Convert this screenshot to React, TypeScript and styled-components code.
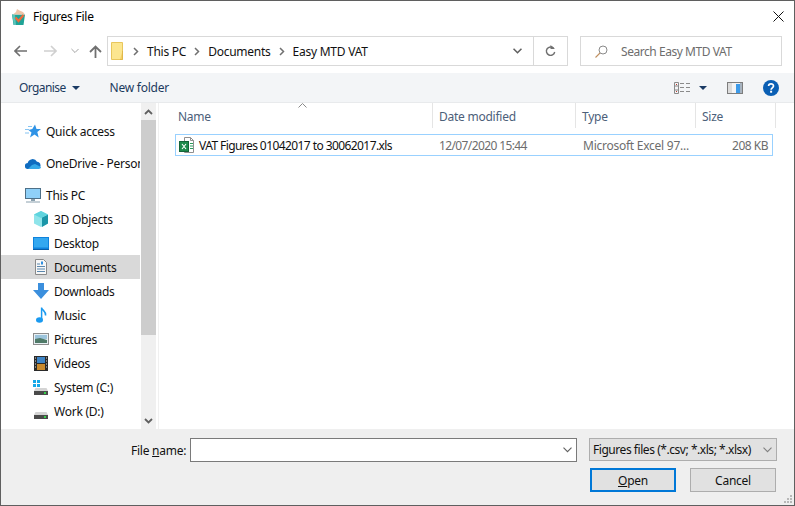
import { FC, ReactNode } from "react";
import styled, { createGlobalStyle } from "styled-components";

const GlobalStyle = createGlobalStyle`
  html, body {
    margin: 0;
    padding: 0;
    background: #fff;
  }
  * {
    box-sizing: border-box;
  }
`;

const ChevronRight = () => (
  <svg width="6" height="9" viewBox="0 0 6 9">
    <path d="M1 1l3.500 3.500L1 8" fill="none" stroke="#707070" strokeWidth="1.500" />
  </svg>
);

const ChevronDown: FC<{ color?: string; weight?: number }> = ({ color = "#606060", weight = 1.1 }) => (
  <svg width="9" height="6" viewBox="0 0 9 6">
    <path d="M.5.7l4 4 4-4" fill="none" stroke={color} strokeWidth={weight} />
  </svg>
);

const Caret: FC<{ color?: string }> = ({ color = "#1a3a64" }) => (
  <svg width="8" height="4" viewBox="0 0 8 4">
    <path d="M0 0h8L4 4z" fill={color} />
  </svg>
);

const AppIcon = () => (
  <svg width="15" height="16" viewBox="0 0 15 16">
    <path d="M1 5.500h13L12.500 16h-10z" fill="#1fa396" />
    <path d="M3 16L1 5.500h3L5 16z" fill="#5cc4ba" />
    <path d="M2 5.500L5 3l1-3 2.500 1.500L12 3l2 2.500z" fill="#eec4a8" />
    <path d="M4.500 8.500l3 3.500 5-6" fill="none" stroke="#ee6a3c" strokeWidth="2.200" />
  </svg>
);

const ArrowLeft: FC<{ color: string }> = ({ color }) => (
  <svg width="13" height="12" viewBox="0 0 13 12">
    <path d="M6 1L1 6l5 5M1 6h12" fill="none" stroke={color} strokeWidth="1.600" />
  </svg>
);

const ArrowRight: FC<{ color: string }> = ({ color }) => (
  <svg width="13" height="12" viewBox="0 0 13 12">
    <path d="M7 1l5 5-5 5M12 6H0" fill="none" stroke={color} strokeWidth="1.600" />
  </svg>
);

const ArrowUp = () => (
  <svg width="13" height="13" viewBox="0 0 13 13">
    <path d="M1 7l5.500-5.500L12 7M6.500 2v11" fill="none" stroke="#707070" strokeWidth="1.800" />
  </svg>
);

const FolderIcon = () => (
  <svg width="14" height="18" viewBox="0 0 14 18">
    <path d="M.5.500h11v17H.5z" fill="#fce68f" stroke="#e8c65c" />
    <path d="M11.500 9v8.500H9" fill="#f4cf62" stroke="#e0b84a" />
  </svg>
);

const RefreshIcon = () => (
  <svg width="11" height="12" viewBox="0 0 11 12">
    <path d="M8.600 3.200A4.200 4.200 0 1 0 9.700 7" fill="none" stroke="#707070" strokeWidth="1.400" />
    <path d="M5.500 0v4H10z" fill="#707070" />
  </svg>
);

const SearchIcon = () => (
  <svg width="13" height="13" viewBox="0 0 13 13">
    <circle cx="8" cy="5" r="4" fill="none" stroke="#8a8a8a" />
    <path d="M5 8l-4.500 4.500" stroke="#c09060" strokeWidth="1.100" />
  </svg>
);

const ViewIcon = () => (
  <svg width="16" height="12" viewBox="0 0 16 12">
    <path d="M.5.500h4v11h-4zM.5 4h4M.5 8h4" fill="none" stroke="#8a8a8a" />
    <path d="M6 1.500h4M12 1.500h4M6 5.500h4M12 5.500h4M6 9.500h4M12 9.500h4" stroke="#8a8a8a" />
    <path d="M2 2h1v1H2zM2 9h1v1H2z" fill="#c0392b" />
  </svg>
);

const PreviewIcon = () => (
  <svg width="16" height="12" viewBox="0 0 16 12">
    <rect x=".5" y=".5" width="15" height="11" fill="#f4f4f4" stroke="#7d7d7d" />
    <rect x="1" y="1" width="4" height="10" fill="#dcdcdc" />
    <rect x="9" y="2" width="4" height="9" fill="#3d9ae8" />
    <rect x="13" y="1" width="2" height="10" fill="#a8b4c0" />
  </svg>
);

const HelpIcon = () => (
  <svg width="16" height="16" viewBox="0 0 16 16">
    <circle cx="8" cy="8" r="8" fill="#0a5fb4" />
    <path d="M5.600 6.100c0-3 4.900-3 4.900-.1 0 1.800-2.400 1.900-2.400 3.700" fill="none" stroke="#fff" strokeWidth="1.700" />
    <rect x="7.100" y="10.700" width="2" height="2" fill="#fff" />
  </svg>
);

const ExcelIcon = () => (
  <svg width="16" height="16" viewBox="0 0 16 16">
    <path d="M5.500.5h6l3 3v12h-9z" fill="#fff" stroke="#8f8f8f" />
    <path d="M11.500.5v3h3" fill="none" stroke="#8f8f8f" />
    <rect x=".5" y="4.500" width="9" height="10" fill="#1f8a4c" stroke="#14643a" />
    <path d="M3 7l4 5M7 7l-4 5" stroke="#fff" strokeWidth="1.100" />
    <path d="M11 6.500h3M11 9h3M11 11.500h3" stroke="#2a9a5a" />
  </svg>
);

const QuickAccessIcon = () => (
  <svg width="16" height="15" viewBox="0 0 16 15">
    <path d="M10 .5l1.500 4.500H16l-3.700 3 1.400 5.500-4.200-3-4.500 3L6.500 8.500 3.500 6l3.800-1z" fill="#2f93e6" />
    <path d="M0 5.500h4M3 2.500h4M0 9h4" stroke="#86c4f2" />
  </svg>
);

const OneDriveIcon = () => (
  <svg width="16" height="11" viewBox="0 0 16 11">
    <path d="M3 11a3 3 0 0 1-.3-6A5 5 0 0 1 12 3.800 3.700 3.700 0 0 1 13 11z" fill="#0f6cc0" />
    <path d="M3 11l4-4 3-1 6 3c0 1-1 2-3 2z" fill="#35a8e8" />
  </svg>
);

const MonitorIcon = () => (
  <svg width="16" height="15" viewBox="0 0 16 15">
    <rect x=".5" y=".5" width="15" height="10" fill="#8fd0f8" stroke="#4e7088" />
    <path d="M6 11h4v2H6z" fill="#8aa0ae" />
    <path d="M1 14h14" stroke="#8aa0ae" />
  </svg>
);

const CubeIcon = () => (
  <svg width="16" height="16" viewBox="0 0 16 16">
    <path d="M8 0l7 3.500v9L8 16l-7-3.500v-9z" fill="#8fe4ea" />
    <path d="M9 6.500l6-3v9L9 16z" fill="#1a96a8" />
    <path d="M8 0l7 3.500L8 7 1 3.500z" fill="#5fd4de" />
  </svg>
);

const DesktopIcon = () => (
  <svg width="16" height="13" viewBox="0 0 16 13">
    <rect x="0" y="0" width="16" height="12" fill="#0f82dc" />
    <rect x="1" y="1" width="14" height="9.500" fill="#34a8f0" />
    <path d="M0 12.500h16" stroke="#0a5da8" />
  </svg>
);

const DocumentsIcon = () => (
  <svg width="12" height="16" viewBox="0 0 12 16">
    <path d="M.5.500h8l3 3v12H.5z" fill="#f7f7f7" stroke="#8a8a8a" />
    <path d="M2 5h3M2 7.500h8M2 10h8M2 12.500h8" stroke="#5a87ad" />
    <path d="M6 2.500h2v3H6z" fill="#2f8fe0" />
  </svg>
);

const DownloadsIcon = () => (
  <svg width="16" height="16" viewBox="0 0 16 16">
    <path d="M5 0h6v7h5l-8 9-8-9h5z" fill="#3b8fdd" />
  </svg>
);

const MusicIcon = () => (
  <svg width="11" height="16" viewBox="0 0 11 16">
    <ellipse cx="3.500" cy="13" rx="3.500" ry="2.800" fill="#1a9af0" />
    <path d="M5.600 13V.5c.5 3 4.500 3.500 4 8" fill="none" stroke="#1a9af0" strokeWidth="1.500" />
  </svg>
);

const PicturesIcon = () => (
  <svg width="16" height="12" viewBox="0 0 16 12">
    <rect x=".5" y=".5" width="15" height="11" fill="#e8f0f4" stroke="#8d8d8d" />
    <path d="M2 2h12v4H2z" fill="#9cc4dc" />
    <path d="M2 6l5-1 7 2v3H2z" fill="#4f7a68" />
  </svg>
);

const VideosIcon = () => (
  <svg width="14" height="15" viewBox="0 0 14 15">
    <rect width="14" height="15" fill="#2a2a2a" />
    <rect x="3" y="1" width="8" height="6" fill="#3d84c6" />
    <rect x="3" y="8" width="8" height="6" fill="#c98a2e" />
    <path d="M1 2h1M1 5h1M1 8h1M1 11h1M12 2h1M12 5h1M12 8h1M12 11h1" stroke="#ddd" />
  </svg>
);

const DriveIcon: FC<{ system?: boolean }> = ({ system }) => (
  <svg width="16" height="16" viewBox="0 0 16 16">
    {system && <path d="M0 1h3v3H0zM4 1h3v3H4zM0 5h3v3H0zM4 5h3v3H4z" fill="#16a8e8" />}
    <path d="M2.500 9h11l1.500 3H1z" fill="#d4d4d4" />
    <rect x="1" y="12" width="14" height="4" fill="#4a4a4a" />
    <rect x="11" y="13" width="2" height="2" fill="#35d04a" />
  </svg>
);

const Grip = () => (
  <svg width="10" height="10" viewBox="0 0 10 10">
    <path d="M7 1h2v2H7zM4 4h2v2H4zM7 4h2v2H7zM1 7h2v2H1zM4 7h2v2H4zM7 7h2v2H7z" fill="#b8b8b8" />
  </svg>
);

interface NavEntry {
  label: string;
  icon: ReactNode;
  child?: boolean;
  gapBefore?: boolean;
  selected?: boolean;
}

const navEntries: NavEntry[] = [
  { label: "Quick access", icon: <QuickAccessIcon /> },
  { label: "OneDrive - Personal", icon: <OneDriveIcon />, gapBefore: true },
  { label: "This PC", icon: <MonitorIcon />, gapBefore: true },
  { label: "3D Objects", icon: <CubeIcon />, child: true },
  { label: "Desktop", icon: <DesktopIcon />, child: true },
  { label: "Documents", icon: <DocumentsIcon />, child: true, selected: true },
  { label: "Downloads", icon: <DownloadsIcon />, child: true },
  { label: "Music", icon: <MusicIcon />, child: true },
  { label: "Pictures", icon: <PicturesIcon />, child: true },
  { label: "Videos", icon: <VideosIcon />, child: true },
  { label: "System (C:)", icon: <DriveIcon system />, child: true },
  { label: "Work (D:)", icon: <DriveIcon />, child: true },
];

const columns = [
  { label: "Name", width: 261 },
  { label: "Date modified", width: 143 },
  { label: "Type", width: 120 },
  { label: "Size", width: 80 },
];

const App = () => {
  return (
    <>
      <GlobalStyle />
      <Window>
        <TitleBar>
          <AppIcon />
          <Title>Figures File</Title>
          <CloseButton>
            <svg width="11" height="11" viewBox="0 0 11 11">
              <path d="M.5.500l10 10M10.500.5l-10 10" stroke="#111" strokeWidth="1" />
            </svg>
          </CloseButton>
        </TitleBar>

        <NavRow>
          <NavButtons>
            <ArrowLeft color="#707070" />
            <ArrowRight color="#d0d0d0" />
            <SmallChevron>
              <ChevronDown color="#a0a0a0" />
            </SmallChevron>
            <UpButton>
              <ArrowUp />
            </UpButton>
          </NavButtons>
          <AddressBar>
            <Crumbs>
              <FolderIcon />
              <ChevronRight />
              <span>This PC</span>
              <ChevronRight />
              <span>Documents</span>
              <ChevronRight />
              <span>Easy MTD VAT</span>
            </Crumbs>
            <AddressChevron>
              <ChevronDown weight={1.6} />
            </AddressChevron>
            <RefreshButton>
              <RefreshIcon />
            </RefreshButton>
          </AddressBar>
          <SearchBox>
            <SearchIcon />
            <SearchText>Search Easy MTD VAT</SearchText>
          </SearchBox>
        </NavRow>

        <Toolbar>
          <ToolButton>
            <Organise>Organise</Organise>
            <Caret />
          </ToolButton>
          <ToolButton>New folder</ToolButton>
          <ToolIcons>
            <ViewGroup>
              <ViewIcon />
              <Caret />
            </ViewGroup>
            <PreviewIcon />
            <HelpIcon />
          </ToolIcons>
        </Toolbar>

        <Main>
          <Sidebar>
            {navEntries.map((entry) => (
              <NavItem
                key={entry.label}
                $child={entry.child}
                $gapBefore={entry.gapBefore}
                $selected={entry.selected}
              >
                <NavIcon>{entry.icon}</NavIcon>
                <span>{entry.label}</span>
              </NavItem>
            ))}
          </Sidebar>
          <ScrollBar>
            <ScrollArrow>
              <svg width="9" height="6" viewBox="0 0 9 6">
                <path d="M1 5l3.500-3.500L8 5" fill="none" stroke="#606060" strokeWidth="1.800" />
              </svg>
            </ScrollArrow>
            <ScrollThumb />
            <ScrollArrow>
              <svg width="9" height="6" viewBox="0 0 9 6">
                <path d="M1 1l3.500 3.500L8 1" fill="none" stroke="#606060" strokeWidth="1.800" />
              </svg>
            </ScrollArrow>
          </ScrollBar>
          <FileList>
            <ListHeader>
              <SortMark>
                <svg width="9" height="5" viewBox="0 0 9 5">
                  <path d="M.5 4.500l4-4 4 4" fill="none" stroke="#8a8a8a" />
                </svg>
              </SortMark>
              {columns.map((col) => (
                <HeaderCell key={col.label} $width={col.width}>
                  {col.label}
                </HeaderCell>
              ))}
            </ListHeader>
            <FileRow>
              <NameCell>
                <ExcelIcon />
                <FileName>VAT Figures 01042017 to 30062017.xls</FileName>
              </NameCell>
              <DateCell>12/07/2020 15:44</DateCell>
              <TypeCell>Microsoft Excel 97...</TypeCell>
              <SizeCell>208 KB</SizeCell>
            </FileRow>
          </FileList>
        </Main>

        <Footer>
          <FooterRow>
            <FileLabel>
              <span>
                File <u>n</u>ame:
              </span>
            </FileLabel>
            <FileInput>
              <ChevronDown />
            </FileInput>
            <TypeSelect>
              <TypeText>Figures files (*.csv; *.xls; *.xlsx)</TypeText>
              <ChevronDown color="#808080" />
            </TypeSelect>
          </FooterRow>
          <ButtonRow>
            <DialogButton $primary>
              <u>O</u>pen
            </DialogButton>
            <DialogButton>Cancel</DialogButton>
          </ButtonRow>
          <GripCorner>
            <Grip />
          </GripCorner>
        </Footer>
      </Window>
    </>
  );
};

const Window = styled.div`
  position: relative;
  width: 795px;
  height: 506px;
  display: flex;
  flex-direction: column;
  background: #fff;
  border: 1px solid #5f5f5f;
  font-family: "Noto Sans", "Open Sans", sans-serif;
  font-size: 12px;
  letter-spacing: -0.25px;
  color: #111;
  overflow: hidden;
`;

const TitleBar = styled.div`
  height: 35px;
  flex: none;
  display: flex;
  align-items: center;
  padding: 0 10px 4px 10px;
  gap: 7px;
`;

const Title = styled.div`
  flex: 1;
  color: #000;
`;

const CloseButton = styled.div`
  display: flex;
`;

const NavRow = styled.div`
  height: 30px;
  flex: none;
  display: flex;
  align-items: center;
`;

const NavButtons = styled.div`
  width: 106px;
  display: flex;
  align-items: center;
  padding-left: 13px;
  gap: 17px;
`;

const SmallChevron = styled.div`
  display: flex;
  width: 8px;
  margin: 0 -3px;
`;

const UpButton = styled.div`
  display: flex;
  margin-left: -4px;
`;

const AddressBar = styled.div`
  width: 461px;
  height: 30px;
  display: flex;
  align-items: stretch;
  border: 1px solid #d9d9d9;
`;

const Crumbs = styled.div`
  flex: 1;
  display: flex;
  align-items: center;
  padding-left: 3px;
  gap: 8px;
`;

const AddressChevron = styled.div`
  width: 32px;
  display: flex;
  align-items: center;
  justify-content: center;
`;

const RefreshButton = styled.div`
  width: 34px;
  display: flex;
  align-items: center;
  justify-content: center;
  border-left: 1px solid #d9d9d9;
`;

const SearchBox = styled.div`
  width: 202px;
  height: 30px;
  margin-left: 12px;
  display: flex;
  align-items: center;
  padding-left: 14px;
  gap: 13px;
  border: 1px solid #d9d9d9;
`;

const SearchText = styled.span`
  color: #6d6d6d;
  letter-spacing: -0.45px;
`;

const Toolbar = styled.div`
  height: 30px;
  margin-top: 7px;
  flex: none;
  display: flex;
  align-items: center;
  padding-left: 18px;
  gap: 30px;
  background: #f3f5f7;
  border-bottom: 1px solid #e8eaec;
`;

const ToolButton = styled.div`
  display: flex;
  align-items: center;
  gap: 6px;
  color: #1c3a5e;
`;

const Organise = styled.span`
  letter-spacing: -0.6px;
`;

const ToolIcons = styled.div`
  margin-left: auto;
  display: flex;
  align-items: center;
  padding-right: 15px;
  gap: 20px;
`;

const ViewGroup = styled.div`
  display: flex;
  align-items: center;
  gap: 9px;
`;

const Main = styled.div`
  flex: 1;
  min-height: 0;
  display: flex;
`;

const Sidebar = styled.div`
  width: 139px;
  flex: none;
  margin-right: 1px;
  padding-top: 16px;
  overflow: hidden;
`;

const NavItem = styled.div<{ $child?: boolean; $gapBefore?: boolean; $selected?: boolean }>`
  height: 24px;
  display: flex;
  align-items: center;
  padding-left: ${(props) => (props.$child ? "32px" : "24px")};
  margin-top: ${(props) => (props.$gapBefore ? "8px" : "0")};
  background: ${(props) => (props.$selected ? "#d9d9d9" : "transparent")};
  white-space: nowrap;
  overflow: hidden;
`;

const NavIcon = styled.span`
  width: 16px;
  height: 16px;
  flex: none;
  display: flex;
  align-items: center;
  justify-content: center;
  margin-right: 5px;
`;

const ScrollBar = styled.div`
  width: 15px;
  flex: none;
  display: flex;
  flex-direction: column;
  background: #f0f0f0;
`;

const ScrollArrow = styled.div`
  height: 17px;
  flex: none;
  display: flex;
  align-items: center;
  justify-content: center;
`;

const ScrollThumb = styled.div`
  height: 215px;
  margin-bottom: auto;
  background: #cdcdcd;
`;

const FileList = styled.div`
  flex: 1;
  margin-left: 2px;
  border-left: 1px solid #f0f0f0;
`;

const ListHeader = styled.div`
  position: relative;
  height: 25px;
  display: flex;
  padding-left: 13px;
`;

const SortMark = styled.div`
  position: absolute;
  left: 139px;
  top: 0;
  display: flex;
`;

const HeaderCell = styled.div<{ $width: number }>`
  width: ${(props) => props.$width}px;
  flex: none;
  display: flex;
  align-items: center;
  padding: 2px 0 0 6px;
  color: #4c607a;
  border-right: 1px solid #e5e5e5;
`;

const FileRow = styled.div`
  width: 598px;
  height: 22px;
  margin: 6px 0 0 16px;
  display: flex;
  align-items: center;
  border: 1px solid #99d1ff;
`;

const NameCell = styled.div`
  width: 258px;
  flex: none;
  display: flex;
  align-items: center;
  gap: 4px;
  padding-left: 3px;
  white-space: nowrap;
`;

const FileName = styled.span`
  letter-spacing: -0.58px;
`;

const DateCell = styled.div`
  width: 144px;
  flex: none;
  padding-left: 5px;
  color: #6d6d6d;
  letter-spacing: -0.62px;
  white-space: nowrap;
`;

const TypeCell = styled.div`
  width: 120px;
  flex: none;
  padding-left: 5px;
  color: #6d6d6d;
  white-space: nowrap;
`;

const SizeCell = styled.div`
  flex: 1;
  padding-right: 4px;
  text-align: right;
  color: #6d6d6d;
  letter-spacing: -0.5px;
`;

const Footer = styled.div`
  position: relative;
  height: 76px;
  flex: none;
  padding-top: 9px;
  background: #efefef;
`;

const FooterRow = styled.div`
  display: flex;
  align-items: flex-start;
  height: 24px;
`;

const FileLabel = styled.div`
  width: 189px;
  height: 24px;
  flex: none;
  display: flex;
  align-items: center;
  padding-left: 130px;
  white-space: nowrap;
`;

const FileInput = styled.div`
  width: 387px;
  height: 24px;
  flex: none;
  display: flex;
  align-items: center;
  justify-content: flex-end;
  padding-right: 4px;
  background: #fff;
  border: 1px solid #7a7a7a;
`;

const TypeSelect = styled.div`
  width: 188px;
  height: 23px;
  flex: none;
  margin-left: 12px;
  display: flex;
  align-items: center;
  justify-content: space-between;
  padding: 0 4px 0 3px;
  background: #e1e1e1;
  border: 1px solid #adadad;
`;

const TypeText = styled.span`
  letter-spacing: -0.45px;
`;

const ButtonRow = styled.div`
  display: flex;
  justify-content: flex-end;
  gap: 14px;
  margin-top: 6px;
  padding-right: 18px;
`;

const DialogButton = styled.div<{ $primary?: boolean }>`
  width: 86px;
  height: 24px;
  display: flex;
  align-items: center;
  justify-content: center;
  background: #e1e1e1;
  border: ${(props) => (props.$primary ? "2px solid #0078d7" : "1px solid #adadad")};
`;

const GripCorner = styled.div`
  position: absolute;
  right: 1px;
  bottom: 1px;
  display: flex;
`;

export default App;
